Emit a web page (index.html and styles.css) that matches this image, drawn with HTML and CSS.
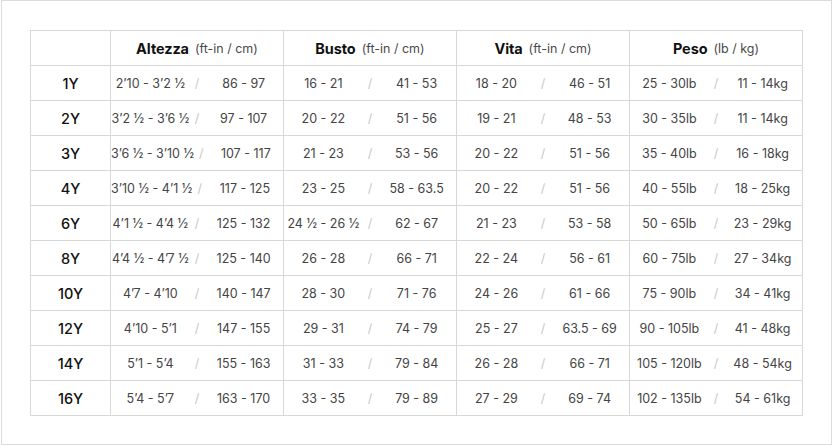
FILE: index.html
```html
<!DOCTYPE html>
<html lang="it">
<head>
<meta charset="utf-8">
<title>Tabella taglie</title>
<link rel="stylesheet" href="styles.css">
</head>
<body>
<div class="frame">
  <div class="chart" id="chart">
    <div class="cell corner"></div>
    <div class="cell head"><b>Altezza</b><span>(ft-in / cm)</span></div>
    <div class="cell head"><b>Busto</b><span>(ft-in / cm)</span></div>
    <div class="cell head"><b>Vita</b><span>(ft-in / cm)</span></div>
    <div class="cell head"><b>Peso</b><span>(lb / kg)</span></div>
  </div>
</div>
<script src="app.js"></script>
</body>
</html>
```
FILE: app.js
```js
var rows = [
  ["1Y", ["2’10 - 3’2 ½","86 - 97"], ["16 - 21","41 - 53"], ["18 - 20","46 - 51"], ["25 - 30lb","11 - 14kg"]],
  ["2Y", ["3’2 ½ - 3’6 ½","97 - 107"], ["20 - 22","51 - 56"], ["19 - 21","48 - 53"], ["30 - 35lb","11 - 14kg"]],
  ["3Y", ["3’6 ½ - 3’10 ½","107 - 117"], ["21 - 23","53 - 56"], ["20 - 22","51 - 56"], ["35 - 40lb","16 - 18kg"]],
  ["4Y", ["3’10 ½ - 4’1 ½","117 - 125"], ["23 - 25","58 - 63.5"], ["20 - 22","51 - 56"], ["40 - 55lb","18 - 25kg"]],
  ["6Y", ["4’1 ½ - 4’4 ½","125 - 132"], ["24 ½ - 26 ½","62 - 67"], ["21 - 23","53 - 58"], ["50 - 65lb","23 - 29kg"]],
  ["8Y", ["4’4 ½ - 4’7 ½","125 - 140"], ["26 - 28","66 - 71"], ["22 - 24","56 - 61"], ["60 - 75lb","27 - 34kg"]],
  ["10Y", ["4’7 - 4’10","140 - 147"], ["28 - 30","71 - 76"], ["24 - 26","61 - 66"], ["75 - 90lb","34 - 41kg"]],
  ["12Y", ["4’10 - 5’1","147 - 155"], ["29 - 31","74 - 79"], ["25 - 27","63.5 - 69"], ["90 - 105lb","41 - 48kg"]],
  ["14Y", ["5’1 - 5’4","155 - 163"], ["31 - 33","79 - 84"], ["26 - 28","66 - 71"], ["105 - 120lb","48 - 54kg"]],
  ["16Y", ["5’4 - 5’7","163 - 170"], ["33 - 35","79 - 89"], ["27 - 29","69 - 74"], ["102 - 135lb","54 - 61kg"]]
];
var chart = document.getElementById("chart");
rows.forEach(function (r) {
  var lab = document.createElement("div");
  lab.className = "cell label";
  lab.textContent = r[0];
  chart.appendChild(lab);
  for (var i = 1; i < r.length; i++) {
    var c = document.createElement("div");
    c.className = "cell data";
    var a = document.createElement("span"); a.className = "v"; a.textContent = r[i][0];
    var s = document.createElement("span"); s.className = "sl"; s.textContent = "/";
    var b = document.createElement("span"); b.className = "v"; b.textContent = r[i][1];
    c.appendChild(a); c.appendChild(s); c.appendChild(b);
    chart.appendChild(c);
  }
});
```
FILE: styles.css
```css
html, body {
  margin: 0;
  padding: 0;
  background: #fff;
}
body {
  font-family: Inter, "Noto Sans", "Liberation Sans", sans-serif;
  color: #333;
}
.frame {
  box-sizing: border-box;
  width: 831px;
  height: 445px;
  margin-left: 1px;
  border: 1px solid #dcdcdc;
  padding: 29px 0 0 28px;
}
.chart {
  display: grid;
  grid-template-columns: 79px repeat(4, 172px);
  grid-auto-rows: 34px;
  gap: 1px;
  padding: 1px;
  width: max-content;
  background: #d8d8d8;
}
.cell {
  background: #fff;
  display: flex;
  align-items: center;
  justify-content: center;
}
.head {
  gap: 6px;
}
.head b {
  font-weight: 700;
  font-size: 14.5px;
  color: #111;
  letter-spacing: -0.1px;
}
.head span {
  font-size: 12.5px;
  color: #4a4a4a;
}
.label {
  font-size: 14.5px;
  font-weight: 500;
  color: #111;
}
.data {
  display: grid;
  grid-template-columns: 1fr auto 1fr;
  align-items: center;
  justify-items: center;
  font-size: 12.5px;
  color: #444;
  white-space: nowrap;
}
.sl {
  color: #c8c8c8;
  padding: 0 5px;
}
```
